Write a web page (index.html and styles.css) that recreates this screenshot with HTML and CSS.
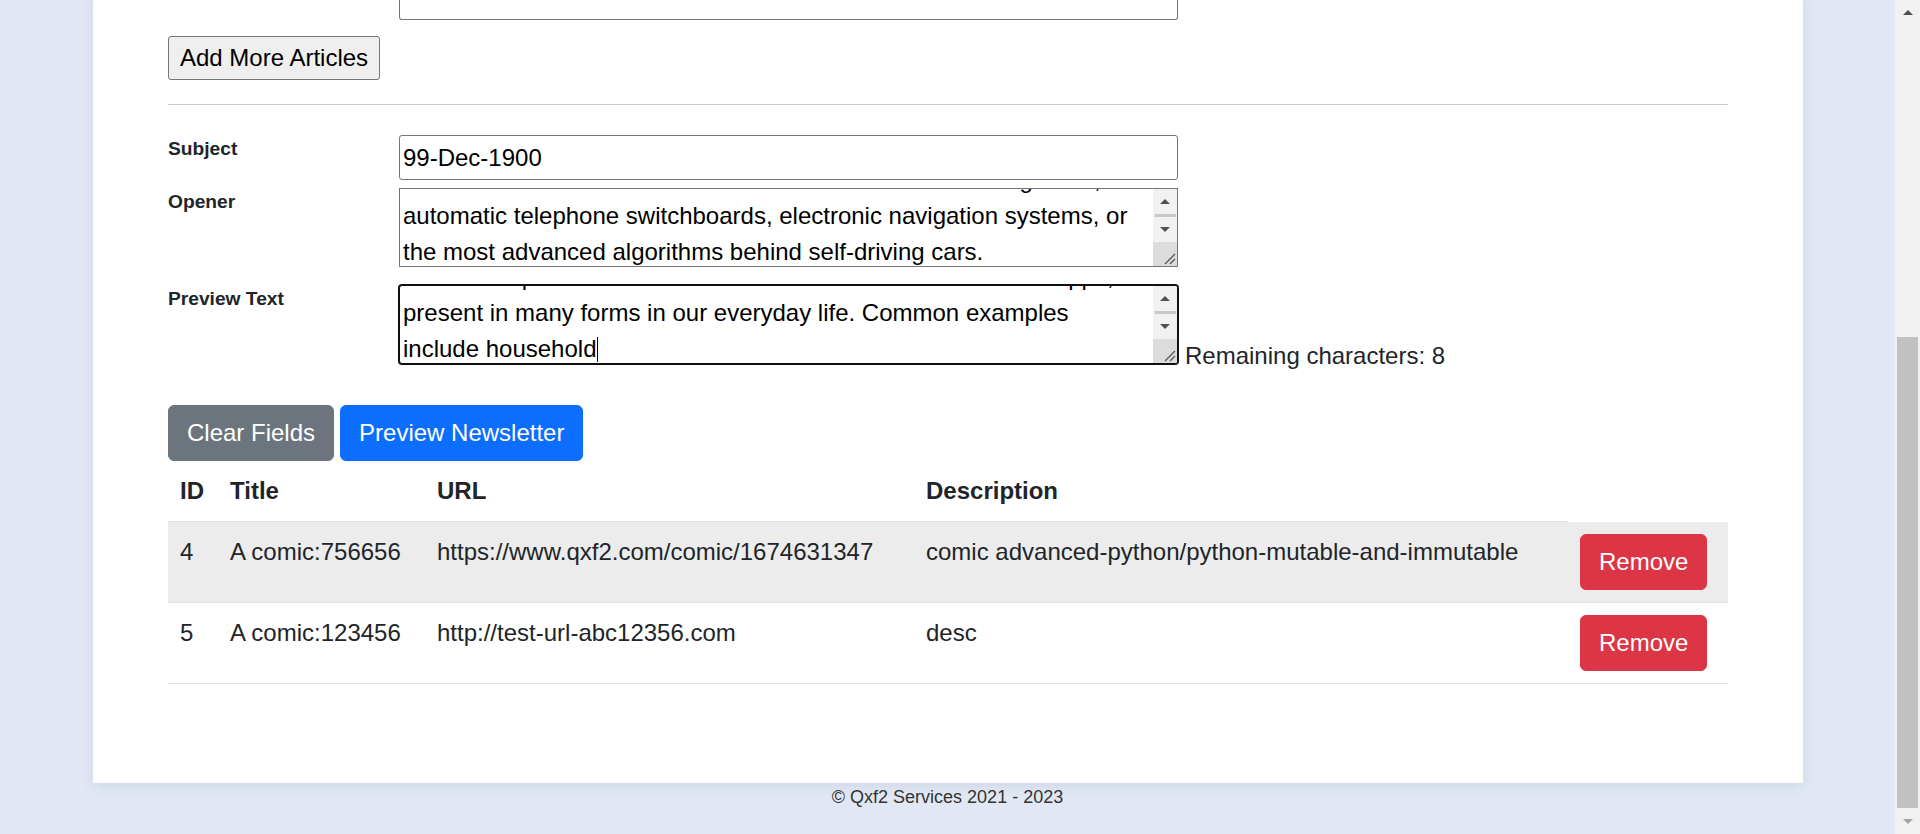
FILE: index.html
```html
<!DOCTYPE html>
<html lang="en">
<head>
<meta charset="utf-8">
<title>Newsletter Generator</title>
<link rel="stylesheet" href="styles.css">
</head>
<body>
<div class="viewport">
  <main class="card">
    <div class="form-row stub-row">
      <div></div>
      <div class="stub"></div>
    </div>
    <button class="btn-plain" type="button">Add More Articles</button>
    <hr class="divider">
    <div class="form-row">
      <label class="form-label">Subject</label>
      <div class="field"><input class="text-input" type="text" value="99-Dec-1900"></div>
    </div>
    <div class="form-row opener-row">
      <label class="form-label">Opener</label>
      <div class="field-flex">
        <div class="ta">
          <div class="ta-text">
            <div class="ta-lines">
              <div class="ta-line">Most of us do not realize that AI has been around for a long while, in</div>
              <div class="ta-line">automatic telephone switchboards, electronic navigation systems, or</div>
              <div class="ta-line">the most advanced algorithms behind self-driving cars.</div>
            </div>
          </div>
          <div class="ta-bar">
            <div class="ta-btn"><span class="tri-up"></span></div>
            <div class="ta-thumb"></div>
            <div class="ta-btn"><span class="tri-down"></span></div>
            <div class="ta-resizer"><svg width="24" height="24" viewBox="0 0 24 24"><path d="M22 12 L12 22 M22 17 L17 22" stroke="#555" stroke-width="1.3" fill="none"/></svg></div>
          </div>
        </div>
      </div>
    </div>
    <div class="form-row preview-row">
      <label class="form-label">Preview Text</label>
      <div class="field-flex">
        <div class="ta focused">
          <div class="ta-text">
            <div class="ta-lines">
              <div class="ta-line">AI is a complex idea that most of us think is far off. But it is in apps,</div>
              <div class="ta-line">present in many forms in our everyday life. Common examples</div>
              <div class="ta-line">include household<span class="caret"></span></div>
            </div>
          </div>
          <div class="ta-bar">
            <div class="ta-btn"><span class="tri-up"></span></div>
            <div class="ta-thumb"></div>
            <div class="ta-btn"><span class="tri-down"></span></div>
            <div class="ta-resizer"><svg width="24" height="24" viewBox="0 0 24 24"><path d="M22 12 L12 22 M22 17 L17 22" stroke="#555" stroke-width="1.3" fill="none"/></svg></div>
          </div>
        </div>
        <span class="remaining">Remaining characters: 8</span>
      </div>
    </div>
    <div class="actions">
      <button class="btn btn-secondary" type="button">Clear Fields</button>
      <button class="btn btn-primary" type="button">Preview Newsletter</button>
    </div>
    <table class="articles">
      <colgroup>
        <col class="c-id"><col class="c-title"><col class="c-url"><col class="c-desc"><col class="c-action">
      </colgroup>
      <thead>
        <tr><th>ID</th><th>Title</th><th>URL</th><th>Description</th></tr>
      </thead>
      <tbody>
        <tr class="hovered">
          <td>4</td><td>A comic:756656</td><td>https://www.qxf2.com/comic/1674631347</td>
          <td>comic advanced-python/python-mutable-and-immutable</td>
          <td><button class="btn btn-danger" type="button">Remove</button></td>
        </tr>
        <tr>
          <td>5</td><td>A comic:123456</td><td>http://test-url-abc12356.com</td>
          <td>desc</td>
          <td><button class="btn btn-danger" type="button">Remove</button></td>
        </tr>
      </tbody>
    </table>
  </main>
  <footer class="footer">© Qxf2 Services 2021 - 2023</footer>
</div>
<div class="page-scroll">
  <div class="ps-btn"><span class="ps-up"></span></div>
  <div class="ps-track"><div class="ps-thumb"></div></div>
  <div class="ps-btn"><span class="ps-down"></span></div>
</div>
</body>
</html>
```

FILE: styles.css
```css
html, body {
  margin: 0;
  padding: 0;
}
body {
  display: flex;
  height: 834px;
  overflow: hidden;
  background: #e1e8f4;
  font-family: "Liberation Sans", Arial, sans-serif;
  font-size: 24px;
  line-height: 1.5;
  color: #212529;
}
.viewport {
  flex: 1;
  min-width: 0;
  height: 834px;
  overflow: hidden;
}
.card {
  display: block;
  margin: 0 92px 0 93px;
  padding: 0 75px 75px;
  background: #fff;
  box-shadow: 0 2px 12px rgba(60, 80, 130, 0.13);
}
.form-row {
  display: grid;
  grid-template-columns: 231px 1fr;
  margin-bottom: 8px;
}
.stub-row {
  margin-bottom: 0;
}
.opener-row {
  margin-bottom: 17.7px;
}
.preview-row {
  margin-bottom: 0;
}
.stub {
  width: 779px;
  height: 20px;
  box-sizing: border-box;
  border: 1px solid #767676;
  border-top: none;
  border-radius: 0 0 3px 3px;
}
.form-label {
  font-weight: bold;
  font-size: 19.2px;
  line-height: 1.5;
  color: #212529;
}
.field {
  font-size: 24px;
  line-height: 36px;
  white-space: nowrap;
}
.field-flex {
  display: flex;
  align-items: flex-start;
  font-size: 24px;
  line-height: 36px;
  white-space: nowrap;
}
.btn-plain {
  display: block;
  margin: 16px 0 0;
  height: 44px;
  padding: 3px 11px;
  font-family: inherit;
  font-size: 24px;
  line-height: 36px;
  color: #000;
  background: #efefef;
  border: 1px solid #767676;
  border-radius: 3px;
  box-sizing: border-box;
}
.divider {
  border: 0;
  border-top: 1px solid #c9c9c9;
  margin: 24px 0 30px;
  height: 0;
}
.text-input {
  width: 779px;
  height: 45px;
  box-sizing: border-box;
  border: 1px solid #767676;
  border-radius: 3px;
  padding: 0 3px;
  margin: 0;
  font: inherit;
  color: #000;
  vertical-align: baseline;
}
.ta {
  display: flex;
  flex: none;
  width: 779px;
  height: 79px;
  box-sizing: border-box;
  border: 1px solid #767676;
  overflow: hidden;
  background: #fff;
}
.ta.focused {
  border-color: #101010;
  border-radius: 3px;
  box-shadow: 0 0 0 1px #101010;
}
.ta-text {
  flex: 1;
  min-width: 0;
  overflow: hidden;
  padding: 0 3px;
  color: #000;
}
.ta-lines {
  margin-top: -27px;
}
.ta-line {
  height: 36px;
  line-height: 36px;
  white-space: nowrap;
}
.caret {
  display: inline-block;
  width: 0;
  height: 25px;
  border-left: 1.5px solid #000;
  vertical-align: -5px;
}
.ta-bar {
  width: 24px;
  flex: none;
  display: flex;
  flex-direction: column;
  background: #f1f1f1;
}
.ta-btn {
  height: 25px;
  flex: none;
  display: flex;
  align-items: center;
  justify-content: center;
}
.ta-thumb {
  height: 3px;
  flex: none;
  margin: 0 1px 0 2px;
  background: #c8c8c8;
}
.ta-resizer {
  margin-top: auto;
  height: 24px;
  flex: none;
  background: #dcdcdc;
  line-height: 0;
}
.tri-up, .tri-down, .ps-up, .ps-down {
  display: block;
  width: 0;
  height: 0;
  border-left: 5px solid transparent;
  border-right: 5px solid transparent;
}
.tri-up {
  border-bottom: 5px solid #505050;
}
.tri-down {
  border-top: 5px solid #505050;
}
.remaining {
  align-self: flex-end;
  margin: 0 0 -10px 7px;
  color: #212529;
}
.actions {
  display: flex;
  gap: 6px;
  margin-top: 41.7px;
}
.btn {
  font-family: inherit;
  font-size: 24px;
  line-height: 36px;
  padding: 9px 18px;
  border: 1px solid transparent;
  border-radius: 6px;
  color: #fff;
  margin: 0;
}
.btn-secondary {
  background: #6c757d;
  border-color: #6c757d;
}
.btn-primary {
  background: #0d6efd;
  border-color: #0d6efd;
}
.btn-danger {
  background: #dc3545;
  border-color: #dc3545;
}
.articles {
  width: 100%;
  table-layout: fixed;
  border-collapse: collapse;
  margin-bottom: 24px;
  font-size: 24px;
  line-height: 36px;
  color: #212529;
}
.c-id { width: 50px; }
.c-title { width: 207px; }
.c-url { width: 489px; }
.c-desc { width: 654px; }
.articles th,
.articles td {
  padding: 12px;
  text-align: left;
  vertical-align: top;
  border-bottom: 1px solid #dee2e6;
  white-space: nowrap;
}
.articles th {
  font-weight: bold;
}
.articles tr.hovered td {
  background: #ececec;
}
.footer {
  padding-top: 1px;
  text-align: center;
  font-size: 18px;
  line-height: 27px;
  color: #333;
}
.page-scroll {
  width: 25px;
  flex: none;
  height: 834px;
  background: #f1f1f1;
  display: flex;
  flex-direction: column;
}
.ps-btn {
  height: 25px;
  flex: none;
  display: flex;
  align-items: center;
  justify-content: center;
}
.ps-up {
  border-bottom: 5px solid #505050;
}
.ps-down {
  border-top: 5px solid #a3a3a3;
}
.ps-track {
  flex: 1;
}
.ps-thumb {
  margin: 312px 2px 0;
  height: 471px;
  background: #c1c1c1;
}
```
